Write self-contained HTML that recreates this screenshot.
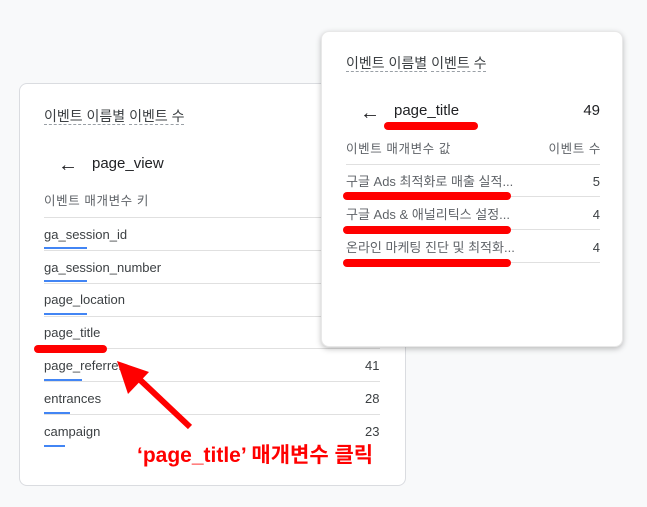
<!DOCTYPE html>
<html><head><meta charset="utf-8"><style>
body{margin:0;width:647px;height:507px;background:#f8f9fa;position:relative;overflow:hidden;font-family:"Liberation Sans","Noto Sans CJK KR",sans-serif;color:#3c4043}
.a{position:absolute;white-space:nowrap;line-height:16px}
.card{position:absolute;background:#fff;border:1px solid #dadce0;border-radius:8px}
.dash{border-bottom:1px dashed #9aa0a6}
.line{position:absolute;height:1px;background:#e0e0e0}
.blue{position:absolute;height:2px;background:#4285f4}
.red{position:absolute;height:8px;background:#f00;border-radius:4px}
.t13{font-size:13px}
.g{color:#5f6368;font-size:12.5px;letter-spacing:0.6px}
.r{text-align:right}
</style></head><body>
<div class="card" style="left:19px;top:83px;width:385px;height:401px"></div>
<div class="a" style="left:44px;top:108px;font-size:14px"><span class="dash">이벤트 이름별</span> <span class="dash">이벤트 수</span></div>
<div class="a" style="left:58px;top:157px;font-size:20px;color:#202124">←</div>
<div class="a" style="left:92px;top:156px;font-size:15px;color:#202124">page_view</div>
<div class="a g" style="left:44px;top:193px">이벤트 매개변수 키</div>
<div class="line" style="left:44px;top:217px;width:336px"></div>

<div class="a t13" style="left:44px;top:227px">ga_session_id</div><div class="blue" style="left:44px;top:247px;width:43px"></div><div class="line" style="left:44px;top:250px;width:336px"></div>
<div class="a t13" style="left:44px;top:260px">ga_session_number</div><div class="blue" style="left:44px;top:280px;width:43px"></div><div class="line" style="left:44px;top:283px;width:336px"></div>
<div class="a t13" style="left:44px;top:292px">page_location</div><div class="blue" style="left:44px;top:313px;width:43px"></div><div class="line" style="left:44px;top:316px;width:336px"></div>
<div class="a t13" style="left:44px;top:325px">page_title</div><div class="line" style="left:44px;top:348px;width:336px"></div>
<div class="red" style="left:34px;top:345px;width:73px"></div>
<div class="a t13" style="left:44px;top:358px">page_referrer</div><div class="a t13" style="left:365px;top:358px">41</div><div class="blue" style="left:44px;top:379px;width:38px"></div><div class="line" style="left:44px;top:381px;width:336px"></div>
<div class="a t13" style="left:44px;top:391px">entrances</div><div class="a t13" style="left:365px;top:391px">28</div><div class="blue" style="left:44px;top:412px;width:26px"></div><div class="line" style="left:44px;top:414px;width:336px"></div>
<div class="a t13" style="left:44px;top:424px">campaign</div><div class="a t13" style="left:365px;top:424px">23</div><div class="blue" style="left:44px;top:445px;width:21px"></div>

<svg class="a" style="left:112px;top:356px" width="85" height="80"><line x1="78" y1="71" x2="24" y2="20" stroke="#f00" stroke-width="6"/><polygon points="5,5 37,16 16,38" fill="#f00"/></svg>
<div class="a" style="left:137px;top:444px;font-size:21px;line-height:24px;font-weight:bold;color:#f00">‘page_title’ 매개변수 클릭</div>

<div class="card" style="left:321px;top:31px;width:300px;height:314px;border-color:#e8e8e8;box-shadow:0 2px 6px rgba(0,0,0,.25)"></div>
<div class="a" style="left:346px;top:55px;font-size:14px"><span class="dash">이벤트 이름별</span> <span class="dash">이벤트 수</span></div>
<div class="a" style="left:360px;top:105px;font-size:20px;color:#202124">←</div>
<div class="a" style="left:394px;top:103px;font-size:15px;color:#202124">page_title</div>
<div class="a r" style="left:560px;width:40px;top:103px;font-size:15px;color:#202124">49</div>
<div class="red" style="left:384px;top:122px;width:94px"></div>
<div class="a g" style="left:346px;top:141px">이벤트 매개변수 값</div>
<div class="a g r" style="left:520px;width:81px;top:141px">이벤트 수</div>
<div class="line" style="left:346px;top:164px;width:254px"></div>
<div class="a t13" style="left:346px;top:174px;color:#5f6368">구글 Ads 최적화로 매출 실적...</div><div class="a t13 r" style="left:560px;width:40px;top:174px">5</div>
<div class="line" style="left:346px;top:196px;width:254px"></div><div class="red" style="left:343px;top:192px;width:168px"></div>
<div class="a t13" style="left:346px;top:207px;color:#5f6368">구글 Ads &amp; 애널리틱스 설정...</div><div class="a t13 r" style="left:560px;width:40px;top:207px">4</div>
<div class="line" style="left:346px;top:229px;width:254px"></div><div class="red" style="left:343px;top:226px;width:168px"></div>
<div class="a t13" style="left:346px;top:240px;color:#5f6368">온라인 마케팅 진단 및 최적화...</div><div class="a t13 r" style="left:560px;width:40px;top:240px">4</div>
<div class="line" style="left:346px;top:262px;width:254px"></div><div class="red" style="left:343px;top:259px;width:168px"></div>
</body></html>
